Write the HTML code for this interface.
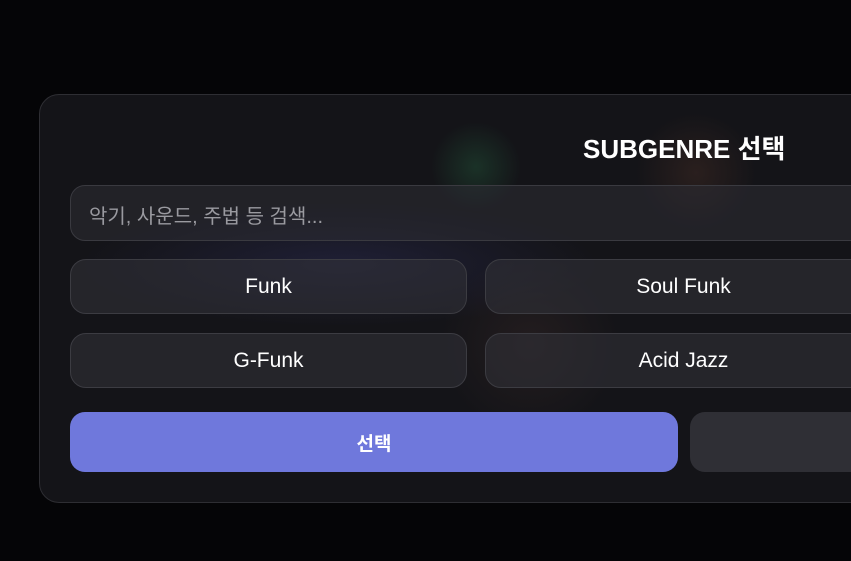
<!DOCTYPE html>
<html><head><meta charset="utf-8"><style>
*{margin:0;padding:0;box-sizing:border-box}
body{width:851px;height:561px;overflow:hidden;background:#050507;font-family:"Liberation Sans","Noto Sans CJK KR",sans-serif;position:relative}
.card{position:absolute;left:39px;top:94px;width:1300px;height:409px;border-radius:20px;border:1px solid #2e2e33;
background:radial-gradient(circle at 436px 72px,rgba(40,110,70,.33),transparent 45px),radial-gradient(circle at 656px 78px,rgba(120,70,50,.22),transparent 60px),radial-gradient(ellipse at 300px 170px,rgba(45,45,90,.45),transparent 260px),radial-gradient(circle at 490px 250px,rgba(90,60,55,.22),transparent 90px),#141418}
.t{position:absolute;left:583px;top:129px;color:#fff;font-size:26px;font-weight:bold;white-space:nowrap}
.in{position:absolute;left:70px;top:185px;width:900px;height:56px;border-radius:15px;border:1px solid #3a3a40;background:rgba(45,45,52,.55);color:#9a9aa0;font-size:20px;padding:14px 18px}
.b{position:absolute;height:55px;border-radius:16px;border:1px solid #3c3c42;background:rgba(48,48,55,.6);color:#fff;font-size:21px;display:flex;align-items:center;justify-content:center}
.p{position:absolute;left:70px;top:412px;width:608px;height:60px;border-radius:15px;background:#6f78dc;color:#fff;font-size:19px;font-weight:bold;display:flex;align-items:center;justify-content:center}
.s{position:absolute;left:690px;top:412px;width:400px;height:60px;border-radius:15px;background:#2f2f35}
</style></head><body>
<div class="card"></div>
<div class="t">SUBGENRE 선택</div>
<div class="in">악기, 사운드, 주법 등 검색...</div>
<div class="b" style="left:70px;top:259px;width:397px">Funk</div>
<div class="b" style="left:485px;top:259px;width:397px">Soul Funk</div>
<div class="b" style="left:70px;top:333px;width:397px">G-Funk</div>
<div class="b" style="left:485px;top:333px;width:397px">Acid Jazz</div>
<div class="p">선택</div>
<div class="s"></div>
</body></html>
